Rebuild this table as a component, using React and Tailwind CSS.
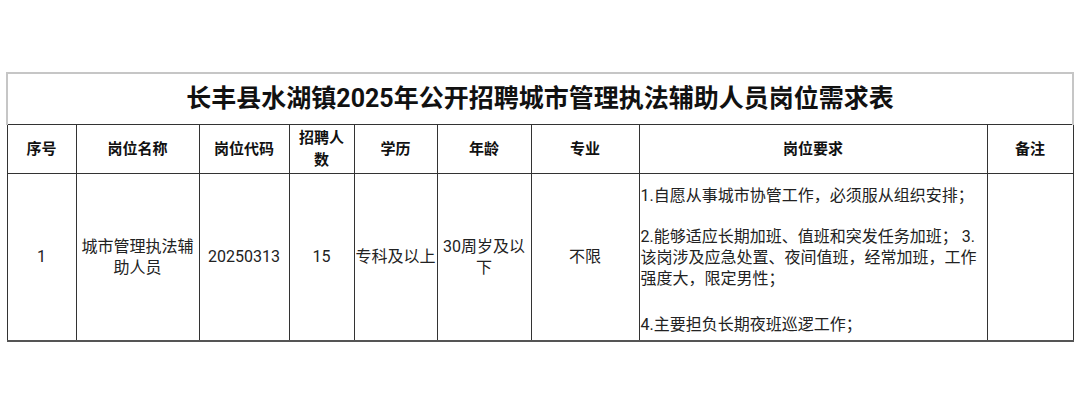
import React from 'react';

const cols = [69, 123, 90, 65, 83, 94, 108, 348, 86];

const headers = ['序号', '岗位名称', '岗位代码', '招聘人数', '学历', '年龄', '专业', '岗位要求', '备注'];

const row = {
    no: '1',
    name: '城市管理执法辅助人员',
    code: '20250313',
    count: '15',
    edu: '专科及以上',
    age: '30周岁及以下',
    major: '不限',
    remark: '',
};

const App = () => {
    return (
        <div className='bg-white w-[1078px] h-[407px] pt-[72px] pl-[6px] text-[#222]' style={{ fontFamily: 'Roboto, "Noto Sans CJK SC", sans-serif' }}>
            <table className='table-fixed border-collapse w-[1067px]'>
                <colgroup>
                    {cols.map((w, i) => <col key={i} style={{ width: w }} />)}
                </colgroup>
                <tbody>
                    <tr className='h-[51px]'>
                        <td colSpan={9} className='border-x-2 border-t-2 border-b border-x-[#c6c6c6] border-t-[#c6c6c6] border-b-[#333] text-center text-[25px] font-bold text-[#111] leading-none'>
                            长丰县水湖镇2025年公开招聘城市管理执法辅助人员岗位需求表
                        </td>
                    </tr>
                    <tr className='h-[49px]'>
                        {headers.map((h) => (
                            <th key={h} className='border border-[#333] text-center text-[15px] font-bold leading-[22px] px-2 text-[#111]'>{h}</th>
                        ))}
                    </tr>
                    <tr className='h-[166px] text-[16px] leading-[21px]'>
                        <td className='border border-[#333] border-b-2 border-b-[#555] text-center'>{row.no}</td>
                        <td className='border border-[#333] border-b-2 border-b-[#555] text-center px-[4px]'>{row.name}</td>
                        <td className='border border-[#333] border-b-2 border-b-[#555] text-center'>{row.code}</td>
                        <td className='border border-[#333] border-b-2 border-b-[#555] text-center'>{row.count}</td>
                        <td className='border border-[#333] border-b-2 border-b-[#555] text-center whitespace-nowrap px-0'>{row.edu}</td>
                        <td className='border border-[#333] border-b-2 border-b-[#555] text-center px-[4px]'>{row.age}</td>
                        <td className='border border-[#333] border-b-2 border-b-[#555] text-center'>{row.major}</td>
                        <td className='border border-[#333] border-b-2 border-b-[#555] text-left pl-[1px] pr-2 pt-[11px] pb-[5px]'>
                            <p>1.自愿从事城市协管工作，必须服从组织安排；</p>
                            <p className='mt-[20px]'>2.能够适应长期加班、值班和突发任务加班； 3.该岗涉及应急处置、夜间值班，经常加班，工作强度大，限定男性；</p>
                            <p className='mt-[25px]'>4.主要担负长期夜班巡逻工作；</p>
                        </td>
                        <td className='border border-[#333] border-b-2 border-b-[#555]'>{row.remark}</td>
                    </tr>
                </tbody>
            </table>
        </div>
    );
};

export default App;
